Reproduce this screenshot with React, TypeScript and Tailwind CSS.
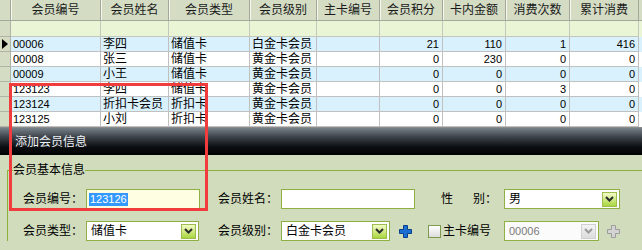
import React from "react"

const font = "font-['Liberation_Sans','Noto_Sans_CJK_SC',sans-serif]"

const columns = [
  { title: "会员编号", w: "w-[90px]", num: false },
  { title: "会员姓名", w: "w-[68px]", num: false },
  { title: "会员类型", w: "w-[81px]", num: false },
  { title: "会员级别", w: "w-[67px]", num: false },
  { title: "主卡编号", w: "w-[63px]", num: false },
  { title: "会员积分", w: "w-[63px]", num: true },
  { title: "卡内金额", w: "w-[63px]", num: true },
  { title: "消费次数", w: "w-[64px]", num: true },
  { title: "累计消费", w: "w-[69px]", num: true },
]

const rows = [
  ["00006", "李四", "储值卡", "白金卡会员", "", "21", "110", "1", "416"],
  ["00008", "张三", "储值卡", "黄金卡会员", "", "0", "230", "0", "0"],
  ["00009", "小王", "储值卡", "黄金卡会员", "", "0", "0", "0", "0"],
  ["123123", "李四", "储值卡", "黄金卡会员", "", "0", "0", "3", "0"],
  ["123124", "折扣卡会员", "折扣卡", "黄金卡会员", "", "0", "0", "0", "0"],
  ["123125", "小刘", "折扣卡", "黄金卡会员", "", "0", "0", "0", "0"],
]

const isDigits = (s: string) => /^[0-9]+$/.test(s)

function Chevron({ disabled = false }: { disabled?: boolean }) {
  return (
    <svg width="9" height="6" viewBox="0 0 9 6">
      <path d="M1 1 L4.5 4.5 L8 1" fill="none" stroke={disabled ? "#9a9a9a" : "#2c2c2c"} strokeWidth="2" />
    </svg>
  )
}

function Select({ value, className, disabled = false }: { value: string; className: string; disabled?: boolean }) {
  return (
    <div
      className={`flex h-[20px] items-center justify-between border border-[#8fb044] pl-[4px] pr-[2px] ${
        disabled ? "bg-[#fbfbfb] text-[#7a7a7a]" : "bg-white text-black"
      } ${className}`}
    >
      <span className={`whitespace-nowrap ${isDigits(value) ? "text-[11px]" : "text-[12px]"}`}>{value}</span>
      <div
        className={`flex h-[15px] w-[15px] items-center justify-center border ${
          disabled
            ? "border-[#d0d0d0] bg-[linear-gradient(to_bottom,#f4f4f4,#dcdcdc)]"
            : "border-[#9cbc4c] bg-[linear-gradient(to_bottom,#f4fdc8,#a9d640)]"
        }`}
      >
        <Chevron disabled={disabled} />
      </div>
    </div>
  )
}

function Plus({ disabled = false }: { disabled?: boolean }) {
  return (
    <svg width="13" height="13" viewBox="0 0 13 13">
      <path
        d="M4.5 0.5 H8.5 V4.5 H12.5 V8.5 H8.5 V12.5 H4.5 V8.5 H0.5 V4.5 H4.5 Z"
        fill={disabled ? "#d4d4d4" : "#1c6fd2"}
        stroke={disabled ? "#9c9c9c" : "#0a3f8c"}
        strokeWidth="1"
      />
    </svg>
  )
}

function Label({ children }: { children: React.ReactNode }) {
  return <span className="w-[63px] shrink-0 whitespace-nowrap text-[12px] text-black">{children}</span>
}

export default function App() {
  return (
    <div className={`relative h-[250px] w-[642px] overflow-hidden bg-[#d1dcbc] ${font}`}>
      {/* grid */}
      <div className="flex flex-col bg-white">
        <div className="flex h-[21px]">
          <div className="h-full w-[11px] shrink-0 border-r border-b border-[#a4a89c] bg-[#d4dcc4]" />
          {columns.map((c) => (
            <div
              key={c.title}
              className={`${c.w} flex h-full shrink-0 items-center justify-center border-r border-b border-[#a4a89c] bg-[#d4dcc4] text-[12px] text-[#1a1a1a] shadow-[inset_1px_0_0_#f4f7ee]`}
            >
              {c.title}
            </div>
          ))}
          <div className="h-full flex-1 border-b border-[#a4a89c] bg-[#d4dcc4]" />
        </div>
        <div className="flex h-[16px]">
          <div className="h-full w-[11px] shrink-0 border-r border-b border-[#b0b4a8] bg-[#d4dcc4]" />
          {columns.map((c) => (
            <div key={c.title} className={`${c.w} h-full shrink-0 border-r border-b border-[#c4c8bc] bg-[#eaf5d6]`} />
          ))}
          <div className="h-full flex-1 bg-[#eaf5d6]" />
        </div>
        {rows.map((r, i) => (
          <div key={i} className="flex h-[15px]">
            <div className="flex h-full w-[11px] shrink-0 items-center justify-center border-r border-b border-[#b0b4a8] bg-[#d4dcc4]">
              {i === 0 && (
                <svg width="6" height="10" viewBox="0 0 6 10">
                  <path d="M0 0 L6 5 L0 10 Z" fill="#000" />
                </svg>
              )}
            </div>
            {columns.map((c, j) => (
              <div
                key={c.title}
                className={`${c.w} flex h-full shrink-0 items-center overflow-hidden whitespace-nowrap border-r border-b border-[#c0c0c0] ${
                  c.num ? "justify-end pr-[3px]" : "pl-[2px]"
                } ${i % 2 === 0 ? "bg-[#d9f1fc]" : "bg-white"} ${isDigits(r[j]) ? "text-[11px]" : "text-[12px]"} text-black`}
              >
                {r[j]}
              </div>
            ))}
            <div className={`h-full flex-1 ${i % 2 === 0 ? "bg-[#d9f1fc]" : "bg-white"}`} />
          </div>
        ))}
        <div className="h-px bg-[#8a8a8a]" />
      </div>

      {/* title bar */}
      <div className="flex h-[27px] items-center bg-[linear-gradient(to_bottom,#788089_0%,#3a4047_35%,#0c0f12_70%,#000_100%)] pl-[15px] text-[12px] text-[#eef2f6]">
        添加会员信息
      </div>

      {/* form */}
      <fieldset className="mt-[8px] ml-[7px] border-t border-l border-[#8db03c] p-0">
        <legend className="ml-[5px] text-[12px] leading-[14px] text-black">会员基本信息</legend>
        <div className="flex flex-col gap-[12px] pt-[12px] pl-[15px]">
          <div className="flex h-[20px] items-center">
            <Label>会员编号：</Label>
            <div className="flex h-[20px] w-[114px] shrink-0 items-center border border-[#8fb044] bg-[#fefee2] pl-[2px]">
              <span className="bg-[#3399ff] px-px text-[11px] leading-[13px] text-white">123126</span>
            </div>
            <div className="w-[18px] shrink-0" />
            <Label>会员姓名：</Label>
            <div className="h-[20px] w-[134px] shrink-0 border border-[#8fb044] bg-white" />
            <div className="w-[26px] shrink-0" />
            <span className="flex w-[63px] shrink-0 whitespace-nowrap text-[12px] text-black">
              <span>性</span>
              <span className="ml-[20px]">别：</span>
            </span>
            <Select value="男" className="w-[116px] shrink-0" />
          </div>
          <div className="flex h-[20px] items-center">
            <Label>会员类型：</Label>
            <Select value="储值卡" className="w-[113px] shrink-0" />
            <div className="w-[19px] shrink-0" />
            <Label>会员级别：</Label>
            <Select value="白金卡会员" className="w-[109px] shrink-0" />
            <div className="ml-[9px] flex shrink-0">
              <Plus />
            </div>
            <div className="ml-[16px] h-[13px] w-[13px] shrink-0 border border-[#7f9a50] bg-[linear-gradient(to_bottom,#ffffff,#dcdcdc)]" />
            <span className="ml-[2px] w-[61px] shrink-0 whitespace-nowrap text-[12px] text-black">主卡编号</span>
            <Select value="00006" className="w-[95px] shrink-0" disabled />
            <div className="ml-[8px] flex shrink-0">
              <Plus disabled />
            </div>
          </div>
        </div>
      </fieldset>

      {/* highlight box */}
      <div className="absolute top-[83px] left-[9px] h-[128px] w-[199px] border-[3px] border-[#f03c3c]" />
    </div>
  )
}
